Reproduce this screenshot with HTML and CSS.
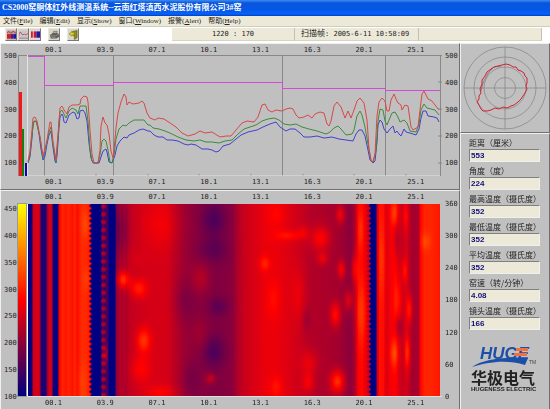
FILE: index.html
```
<!DOCTYPE html>
<html lang="zh-CN">
<head>
    <meta charset="UTF-8">
    <meta name="viewport" content="width=device-width, initial-scale=1.0">
    <title>CS2000窑胴体红外线测温系统</title>
    <link rel="stylesheet" href="styles.css">
</head>
<body>
    <header class="titlebar">
        <h1>CS2000窑胴体红外线测温系统--云南红塔滇西水泥股份有限公司3#窑</h1>
    </header>

    <nav class="menu">
        <a href="#">文件(<u>F</u>ile)</a>
        <a href="#">编辑(<u>E</u>dit)</a>
        <a href="#">显示(<u>S</u>how)</a>
        <a href="#">窗口(<u>W</u>indow)</a>
        <a href="#">报警(<u>A</u>lert)</a>
        <a href="#">帮助(<u>H</u>elp)</a>
    </nav>

    <div class="toolbar">
        <div class="tools">
            <button type="button" aria-label="综合">
                <svg viewBox="0 0 10 10"><rect width="10" height="10" fill="#b9a0a8"/><path d="M0 3l2-2 2 2 3-2 3 2" fill="none" stroke="#c02828"/><rect y="4" width="4" height="5" fill="#d02020"/><rect x="4" y="4" width="3" height="5" fill="#701060"/><rect x="7" y="4" width="3" height="5" fill="#1818a8"/></svg>
            </button>
            <button type="button" aria-label="曲线">
                <svg viewBox="0 0 10 10"><rect width="10" height="10" fill="#cfc4c8"/><path d="M0 6V3l2-1 2 3 2-1 2 1 2-2" fill="none" stroke="#b05060"/><path d="M0 8.500h10" stroke="#8c8488"/></svg>
            </button>
            <button type="button" aria-label="热图">
                <svg viewBox="0 0 10 10"><rect width="10" height="10" fill="#e8d4dc"/><rect y="1" width="2" height="7" fill="#d02020"/><rect x="3" y="1" width="3" height="7" fill="#c01838"/><rect x="6" y="1" width="4" height="7" fill="#2018a0"/></svg>
            </button>
        </div>
        <div class="tools">
            <button type="button" aria-label="打印">
                <svg viewBox="0 0 10 10"><path d="M3 4l1-3h4L7 4z" fill="#aaa" stroke="#555" stroke-width=".6"/><path d="M0 5l3-2h6l1 2v2L7 9H1z" fill="#5c5c54"/><path d="M1 6h6l2-2M2 8h4" fill="none" stroke="#b0b0a4" stroke-width=".7"/></svg>
            </button>
        </div>
        <div class="tools">
            <button type="button" aria-label="退出">
                <svg viewBox="0 0 10 10"><path d="M4 1l5-1v8L6 10V7L4 5z" fill="#8c8c20" stroke="#444400" stroke-width=".5"/><path d="M0 4l3-3v1h3v3H3v1z" fill="#d8cc30" stroke="#666600" stroke-width=".5"/></svg>
            </button>
        </div>
        <div class="status">
            <span class="status-pos">1220 : 170</span>
            <span class="status-frame"><b>扫描帧</b>: 2005-6-11 10:58:09</span>
            <span class="status-rest"></span>
        </div>
    </div>

    <main>
        <div class="charts">
            <section class="panel chart">
                <div class="xaxis"><span>00.1</span><span>03.9</span><span>07.1</span><span>10.1</span><span>13.1</span><span>16.3</span><span>20.1</span><span>25.1</span></div>
                <div class="yaxis yaxis-temp"><span>500</span><span>400</span><span>300</span><span>200</span><span>100</span></div>
                <svg class="plot" viewBox="18 55 424 121" preserveAspectRatio="none">
                    <g class="axes">
                        <path d="M18 55.500H442M44.500 55V176M113.500 55V176M282.500 55V176M385.500 55V176"/>
                        <path d="M18.500 55V176M440.500 55V176M96 174v2M148 174v2M199 174v2M251 174v2M303 174v2M354 174v2M406 174v2M438 82h4M438 109h4M438 136h4M438 163h4"/>
                    </g>
                    <path class="shine" d="M27.500 55V176M19 176H440"/>
                    <rect x="19" y="92" width="3" height="84" fill="#f01818"/>
                    <rect x="22" y="129" width="2" height="47" fill="#108010"/>
                    <rect x="25" y="163" width="2" height="13" fill="#0808b0"/>
                    <path class="line limit" d="M28 56.500H44.500V85.500H113.500V82.500H282.500V88.500H385.500V90.500H440"/>
                    <path class="line min" d="M28 163L30 157 32 138 33 123 35 121 37 123 39 134 41 149 43 160 45 156 47 144 49 135 51 131 53 147 55 161 56 163 57 156 58 142 59 128 60 117 62 114 63 116 64 122 66 123 69 115 73 112 75 113 77 119 79 118 80 111 83 110 85 113 87 121 89 143 91 158 93 163H99L101 157 103 151 106 149 107 152 109 162 112 163 115 155 117 146 120 141 124 137 127 138 129 135 134 133 139 130 143 129 148 131 150 131 154 135 158 137 163 137 167 140 172 140 178 141 184 144 188 145 191 144 196 145 202 149 208 149 212 150 216 152 219 151 223 146 230 144 236 139 241 135 248 132 257 130 263 127 270 124 276 122 280 127 286 131 290 129 295 129 300 133 304 137 310 137 317 136 324 138 332 137 339 139 353 141 356 134 359 130 362 130 365 136 368 150 370 160 373 163 375 161 377 142 378 125 380 120 382 122 384 129 387 133 390 129 393 126 395 133 397 131 399 134 401 136 404 129 406 132 410 133 416 135 419 129 421 118 423 111 426 111 428 116 434 117 437 118 439 122"/>
                    <path class="line avg" d="M28 162L30 154 32 134 34 121 36 121 40 137 43 158 45 150 47 142 49 132 51 127 53 144 56 162 58 138 59 121 60 112 62 110 64 114 66 118 69 111 72 108 76 110 78 114 80 106 86 106 88 121 90 149 92 161 94 163H98L100 155 102 141 104 139 106 141 108 150 110 162 112 163 114 155 116 139 119 129 123 125 126 126 129 123 134 120 140 120 144 120 148 125 150 125 153 128 159 129 165 131 172 134 178 137 186 140 194 141 200 140 206 142 212 142 219 143 225 141 232 140 238 134 244 129 250 127 256 125 262 121 268 119 274 118 279 120 284 124 290 125 296 124 302 127 309 129 317 131 326 134 330 132 334 128 338 126 341 129 346 135 352 134 354 130 357 116 360 111 362 115 365 127 368 144 371 160 373 162 376 151 378 121 380 109 383 110 385 121 387 125 389 120 392 113 395 112 398 117 400 122 404 120 407 123 410 131 416 132 419 124 421 110 424 104 427 108 431 109 435 110 439 115"/>
                    <path class="line max" d="M28 161L30 151 32 130 33 118 35 117 37 121 40 137 43 156 45 149 47 140 49 128 50 122 51 122 53 142 56 160 57 146 59 123 60 108 62 106 64 110 67 114 69 107 72 105 77 105 80 104 81 99 84 96 87 97 88 102 90 130 92 154 94 163H98L100 150 101 126 103 117 105 123 107 125 109 134 111 151 113 158 114 150 116 128 118 113 121 102 124 94 126 97 127 105 129 102 133 104 139 103 142 101 144 103 147 113 150 118 155 120 158 118 164 119 170 123 176 127 182 133 188 136 195 134 200 131 205 133 212 132 220 137 226 136 231 136 236 130 242 123 247 121 254 122 258 117 262 105 265 104 268 110 272 112 276 110 282 111 286 109 290 108 293 109 296 115 299 118 304 117 308 115 312 118 315 114 320 112 324 113 327 124 329 126 331 121 334 106 337 102 341 107 345 118 348 111 351 118 354 110 357 101 360 98 364 103 367 120 369 149 371 161 373 162 375 154 377 116 379 102 382 98 385 101 387 111 389 111 391 100 394 94 396 99 398 103 401 105 402 110 405 105 408 106 411 127 413 130 418 127 420 110 422 94 424 91 428 99 432 101 435 105 439 110"/>
                </svg>
                <div class="yaxis yaxis-temp"><span>500</span><span>400</span><span>300</span><span>200</span><span>100</span></div>
                <div class="xaxis"><span>00.1</span><span>03.9</span><span>07.1</span><span>10.1</span><span>13.1</span><span>16.3</span><span>20.1</span><span>25.1</span></div>
            </section>

            <section class="panel chart chart-map">
                <div class="xaxis"><span>00.1</span><span>03.9</span><span>07.1</span><span>10.1</span><span>13.1</span><span>16.3</span><span>20.1</span><span>25.1</span></div>
                <div class="yaxis yaxis-scale"><span>450</span><span>400</span><span>350</span><span>300</span><span>250</span><span>200</span><span>150</span><span>100</span></div>
                <div class="plot map">
                    <div class="scale"></div>
                    <canvas id="heatmap" width="412" height="192"></canvas>
                </div>
                <div class="yaxis yaxis-angle"><span>360</span><span>300</span><span>240</span><span>180</span><span>120</span><span>60</span><span>0</span></div>
                <div class="xaxis"><span>00.1</span><span>03.9</span><span>07.1</span><span>10.1</span><span>13.1</span><span>16.3</span><span>20.1</span><span>25.1</span></div>
            </section>
        </div>

        <aside class="side">
            <section class="panel polar">
                <svg viewBox="0 0 88 88">
                    <g fill="none" stroke="#828282" stroke-width=".7">
                        <circle cx="44" cy="44" r="41"/>
                        <circle cx="44" cy="44" r="31"/>
                        <circle cx="44" cy="44" r="21"/>
                        <circle cx="44" cy="44" r="10.500"/>
                        <path d="M3 44H85M44 3V85"/>
                    </g>
                    <path d="M45 20L49 21 52 23 55 23 57 26 60 27 63 29 64 32 66 34 66 39 65 42 66 45 64 49 62 52 60 55 57 58 53 61 50 62 46 64 42 63 38 65 34 64 30 66 26 67 22 67 20 65 18 61 16 58 18 55 18 52 20 49 19 45 21 40 21 36 24 32 26 28 30 25 33 23 37 22 41 21z" fill="none" stroke="#d02030"/>
                    <path d="M20 47L22 39 25 33 28 28 33 23 40 22" fill="none" stroke="#7c4a50" stroke-width=".6"/>
                </svg>
            </section>

            <section class="panel readings">
                <form>
                    <label for="distance">距离（厘米）</label>
                    <input type="text" id="distance" value="553">
                    <label for="angle">角度（度）</label>
                    <input type="text" id="angle" value="224">
                    <label for="tmax">最高温度（摄氏度）</label>
                    <input type="text" id="tmax" value="352">
                    <label for="tmin">最低温度（摄氏度）</label>
                    <input type="text" id="tmin" value="352">
                    <label for="tavg">平均温度（摄氏度）</label>
                    <input type="text" id="tavg" value="352">
                    <label for="speed">窑速（转/分钟）</label>
                    <input type="text" id="speed" value="4.08">
                    <label for="lens">镜头温度（摄氏度）</label>
                    <input type="text" id="lens" value="166">
                </form>
                <div class="logo">
                    <svg viewBox="0 0 70 28">
                        <text x="9" y="18" class="logo-mark">HUGE</text>
                        <path d="M45 8.500H57M43 13.500H56" stroke="#f07040" stroke-width="3"/>
                        <path d="M1 26C10 19 34 15 57 17L54 24C36 18 16 21 1 26z" fill="#1c50a8"/>
                        <text x="58" y="23" class="logo-tm">TM</text>
                    </svg>
                    <strong>华极电气</strong>
                    <small>HUGENESS ELECTRIC</small>
                </div>
            </section>
        </aside>
    </main>

    <script src="heatmap.js"></script>
</body>
</html>
```
FILE: styles.css
```
* {
    margin: 0;
    padding: 0;
    box-sizing: border-box;
}

body {
    min-height: 100vh;
    display: flex;
    flex-direction: column;
    background: #ece9d8;
    color: #222;
    font-family: "Liberation Serif", "Noto Sans CJK SC", serif;
    font-size: 8px;
}

/* Title and menu */
.titlebar {
    height: 16px;
    padding-left: 2px;
    background: linear-gradient(#3c8cf0 0, #0855dd 3px, #0558e6 10px, #0662f8 14px, #0040c0 16px);
}

.titlebar h1 {
    color: #fff;
    font-size: 8px;
    line-height: 16px;
    white-space: nowrap;
}

.menu {
    height: 11px;
    padding-left: 3px;
    display: flex;
    gap: 7px;
    border-bottom: 1px solid #d0cdbc;
    font-size: 7px;
    line-height: 10px;
}

.menu a {
    color: #222;
    text-decoration: none;
}

/* Toolbar */
.toolbar {
    height: 16px;
    padding: 1px 8px 1px 5px;
    display: flex;
    gap: 7px;
    background: #fff;
}

.tools {
    display: flex;
}

.tools button {
    width: 12px;
    height: 13px;
    padding: 1px;
    border: 1px solid;
    border-color: #e8e8e0 #777 #777 #e8e8e0;
    background: #d8d4c8;
}

.tools svg {
    display: block;
    width: 9px;
    height: 10px;
}

.status {
    flex: 1;
    margin-left: 86px;
    height: 13px;
    display: grid;
    grid-template-columns: 123fr 124fr 123fr;
    background: #ece9d8;
    font-family: "DejaVu Sans Mono", "Noto Sans CJK SC", monospace;
    font-size: 7px;
    line-height: 12px;
    white-space: nowrap;
}

.status span {
    border-right: 1px solid #c4c0b0;
    border-bottom: 1px solid #d8d4c4;
}

.status b {
    font-size: 8px;
    font-weight: normal;
}

.status-pos {
    text-align: center;
}

.status-frame {
    padding-left: 6px;
}

/* Main area */
main {
    flex: 1;
    display: grid;
    grid-template-columns: 1fr 90px;
}

.charts,
.side {
    display: flex;
    flex-direction: column;
}

.panel {
    background: #c0c0c0;
    border: 1px solid;
    border-color: #f0f0f0 #707070 #707070 #f0f0f0;
}

.chart {
    display: grid;
    grid-template-columns: 17px 1fr 17px;
    grid-template-rows: 11px 121px 13px;
    font-family: "DejaVu Sans Mono", monospace;
    font-size: 7px;
}

.chart-map {
    flex: 1;
    grid-template-rows: 13px 1fr 13px;
}

.xaxis {
    grid-column: 1 / -1;
    margin-left: 44px;
    display: grid;
    grid-template-columns: repeat(8, 1fr);
    line-height: 12px;
}

.yaxis {
    display: flex;
    flex-direction: column;
    justify-content: space-between;
    line-height: 8px;
    padding-left: 3px;
}

.yaxis-temp {
    margin: -3px 0 9px;
}

.yaxis-scale {
    margin: 1px 0 -4px;
}

.yaxis-angle {
    margin: -4px 0;
}

.plot {
    display: block;
    width: 100%;
    height: 100%;
}

.axes path {
    fill: none;
    stroke: #888;
    stroke-width: 1;
}

.shine {
    fill: none;
    stroke: #e4e4e4;
}

.line {
    fill: none;
    stroke-width: 1;
}

.limit { stroke: #d848d8; }
.max { stroke: #d84848; }
.avg { stroke: #3c8c3c; }
.min { stroke: #4040d0; }

/* Temperature map */
.map {
    display: flex;
    padding-right: 2px;
    border-bottom: 1px solid #e0e0e0;
}

.scale {
    width: 8px;
    margin-right: 1px;
    background: linear-gradient(#ffff00, #ff0000 50%, #000080);
    outline: 1px solid #999;
}

.map canvas {
    flex: 1;
    min-width: 0;
    height: 100%;
    border-left: 1px solid #fff;
}

/* Right column */
.polar svg {
    display: block;
    width: 88px;
    height: 88px;
}

.readings {
    flex: 1;
    padding: 3px 9px 0 8px;
    font-family: "Noto Sans CJK SC", sans-serif;
}

.readings label {
    display: block;
    font-size: 8px;
    line-height: 12px;
    white-space: nowrap;
}

.readings input {
    display: block;
    width: 100%;
    height: 13px;
    margin-bottom: 3px;
    padding-left: 1px;
    border: 1px solid;
    border-color: #808080 #f0f0f0 #f0f0f0 #808080;
    background: #ece9d8;
    color: #10107c;
    font: bold 8px "Liberation Sans", sans-serif;
}

.logo {
    margin: 11px 0 0 2px;
    width: 70px;
}

.logo svg {
    display: block;
    width: 70px;
    height: 28px;
}

.logo strong,
.logo small {
    display: block;
    white-space: nowrap;
}

.logo strong {
    font-size: 16px;
    line-height: 16px;
}

.logo small {
    font: bold 6px/8px "Liberation Sans", sans-serif;
}

.logo-mark {
    font: italic bold 17px "Liberation Sans", sans-serif;
    fill: #1c50a8;
}

.logo-tm {
    font: 5px "Liberation Sans", sans-serif;
    fill: #445;
}
```
FILE: heatmap.js
```
const canvas = document.getElementById("heatmap");
const ctx = canvas.getContext("2d");

// mean shell temperature along the kiln: [x, level], level 0..1 on the colour scale
const profile = [
    [0, 0], [3, .03], [5, .4], [9, .43], [11, .38], [13, .06], [17, .05], [19, .3], [21, .42], [23, .4],
    [25, .02], [29, .02], [31, .5], [34, .57], [37, .54], [40, .57], [44, .53], [46, .57], [49, .52], [53, .58],
    [58, .58], [61, .54], [63, 0], [72, 0], [74, .26], [76, .22], [79, .13], [81, 0], [86, 0], [88, .28],
    [92, .35], [98, .35], [102, .38], [117, .41], [132, .42], [140, .41], [147, .36], [157, .3], [167, .27],
    [187, .25], [197, .26], [204, .27], [209, .34], [215, .39], [224, .42], [237, .46], [247, .46],
    [257, .44], [267, .41], [275, .38], [282, .35], [302, .33], [312, .31], [322, .27], [326, .32],
    [330, .5], [334, .51], [338, .44], [341, .35], [342, 0], [347, 0], [349, .4], [351, .53], [355, .52],
    [358, .42], [362, .48], [367, .5], [370, .43], [374, .38], [378, .42], [381, .36], [384, .32],
    [390, .33], [392, .5], [396, .57], [403, .57], [412, .54]
];

// hot and cold spots: [x, y, rx, ry, level]
const spots = [
    [95, 75, 6, 8, .24], [110, 84, 8, 9, .16], [115, 136, 7, 12, .19], [132, 20, 18, 22, .06],
    [112, 164, 10, 14, .1], [132, 188, 15, 7, .08], [92, 25, 8, 28, -.1], [105, 55, 12, 12, .03],
    [185, 15, 12, 16, -.1], [185, 45, 14, 12, -.07], [185, 147, 11, 15, -.1], [155, 96, 10, 20, -.06],
    [182, 174, 5, 5, .13], [172, 74, 9, 14, .09], [190, 102, 10, 9, -.07], [162, 175, 8, 18, -.05],
    [172, 130, 8, 16, .05], [236, 59, 5, 7, .11], [260, 31, 13, 5, .1], [248, 10, 9, 12, .05],
    [292, 34, 9, 12, .16], [294, 54, 5, 6, .12], [275, 28, 6, 7, .08], [312, 10, 4, 9, .16],
    [313, 65, 4, 9, .17], [307, 110, 5, 12, .2], [320, 96, 4, 10, .15], [309, 177, 7, 11, .27],
    [281, 158, 8, 12, .1], [280, 178, 6, 10, .12], [248, 183, 6, 10, .08], [245, 95, 7, 18, .06],
    [270, 90, 7, 25, .06], [278, 115, 4, 12, -.06], [332, 26, 3, 18, .08], [333, 108, 6, 30, .1],
    [326, 65, 3, 14, .15], [353, 55, 4, 35, .07], [366, 9, 4, 12, .13], [366, 149, 4, 13, .15],
    [368, 35, 3, 18, -.1], [376, 66, 3, 12, .13], [370, 95, 4, 20, .1], [381, 105, 3, 14, .18],
    [379, 148, 3, 16, .18], [377, 12, 3, 14, .1], [370, 122, 4, 10, -.1], [397, 37, 5, 8, .07],
    [57, 20, 4, 12, .06], [58, 75, 4, 10, .04], [54, 180, 5, 20, .04], [78, 150, 4, 8, .15]
];

function level(x) {
    for (let i = 1; i < profile.length; i++) {
        if (x <= profile[i][0]) {
            const [x0, a] = profile[i - 1];
            const [x1, b] = profile[i];
            return a + (b - a) * (x - x0) / (x1 - x0);
        }
    }
    return profile[profile.length - 1][1];
}

const image = ctx.createImageData(canvas.width, canvas.height);
for (let y = 0; y < canvas.height; y++) {
    for (let x = 0; x < canvas.width; x++) {
        // the tyres leave a toothed edge
        let edge = 0;
        if ((x > 59 && x < 73) || (x > 337 && x < 345)) edge = Math.sin(y * 1.25);
        let t = level(Math.max(0, x + edge));
        const base = t;
        if (x > 72 && x < 78) t += .1 * Math.sin(y * .8);
        for (const [sx, sy, rx, ry, amount] of spots) {
            const d = ((x - sx) / rx) ** 2 + ((y - sy) / ry) ** 2;
            if (d < 9) t += amount * Math.exp(-d);
        }
        if (base < .1) t = base;
        if (x === 98) t -= .03;
        t = Math.min(1, Math.max(0, t));
        const p = (y * canvas.width + x) * 4;
        image.data[p] = Math.min(255, t * 510);
        image.data[p + 1] = Math.max(0, (t - .5) * 510);
        image.data[p + 2] = Math.max(0, 128 - t * 256);
        image.data[p + 3] = 255;
    }
}
ctx.putImageData(image, 0, 0);
```
